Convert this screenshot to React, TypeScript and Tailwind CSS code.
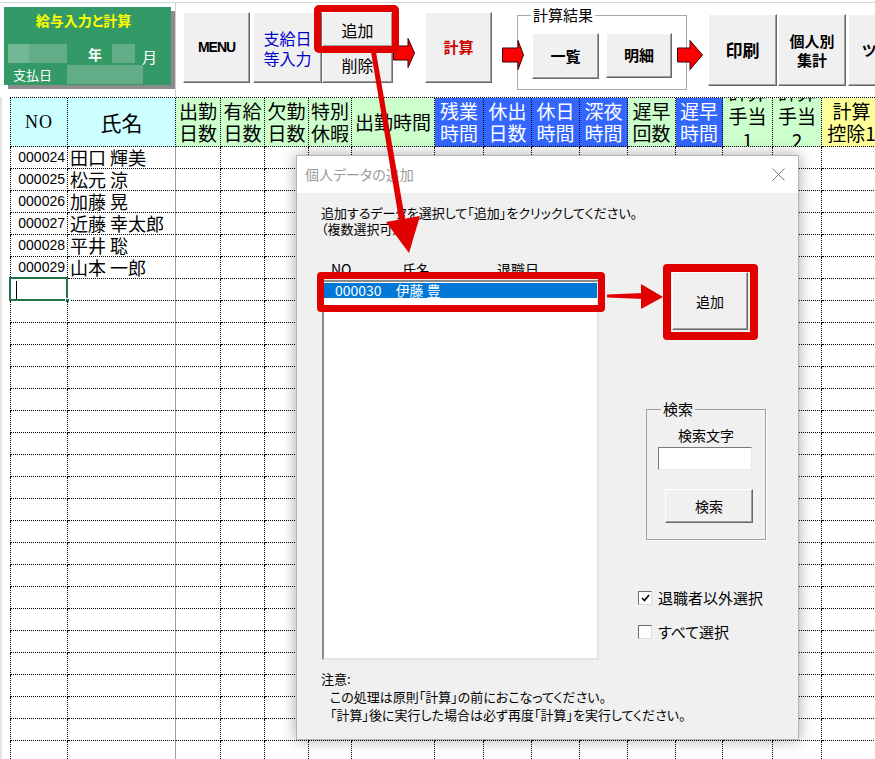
import React from 'react';

const GRID_COLS =
  'grid-cols-[58px_108px_45px_44px_44px_43px_83px_49px_48px_48px_48px_48px_47px_50px_49px_60px]';

const CYAN = 'bg-[#ccffff] text-black';
const GREEN = 'bg-[#ccffcc] text-black';
const BLUE = 'bg-[#3366ff] text-white';
const YELLOW = 'bg-[#ffff99] text-black';

interface Header {
  label: string[];
  cls: string;
  extra?: string;
}

const headers: Header[] = [
  { label: ['NO'], cls: CYAN, extra: "font-['Liberation_Serif',serif] text-[18px] tracking-[1px]" },
  { label: ['氏名'], cls: CYAN, extra: 'text-[21px]' },
  { label: ['出勤', '日数'], cls: GREEN },
  { label: ['有給', '日数'], cls: GREEN },
  { label: ['欠勤', '日数'], cls: GREEN },
  { label: ['特別', '休暇'], cls: GREEN },
  { label: ['出勤時間'], cls: GREEN },
  { label: ['残業', '時間'], cls: BLUE },
  { label: ['休出', '日数'], cls: BLUE },
  { label: ['休日', '時間'], cls: BLUE },
  { label: ['深夜', '時間'], cls: BLUE },
  { label: ['遅早', '回数'], cls: GREEN },
  { label: ['遅早', '時間'], cls: BLUE },
  { label: ['計算', '手当', '1'], cls: GREEN, extra: 'text-[19px] !leading-[24px] pb-[12px]' },
  { label: ['計算', '手当', '2'], cls: GREEN, extra: 'text-[19px] !leading-[24px] pb-[12px]' },
  { label: ['計算', '控除1'], cls: YELLOW },
];

const people: [string, string][] = [
  ['000024', '田口 輝美'],
  ['000025', '松元 涼'],
  ['000026', '加藤 晃'],
  ['000027', '近藤 幸太郎'],
  ['000028', '平井 聡'],
  ['000029', '山本 一郎'],
];

const cell = 'border-r border-b border-dotted border-black';

function Btn({ className = '', children }: { className?: string; children?: React.ReactNode }) {
  return (
    <div
      className={`shrink-0 flex flex-col items-center justify-center whitespace-nowrap bg-[#f0f0f0] border border-t-white border-l-white border-r-[#696969] border-b-[#696969] shadow-[inset_-1px_-1px_0_#a0a0a0] ${className}`}
    >
      {children}
    </div>
  );
}

function BlockArrow({ className = '', w, h, body }: { className?: string; w: number; h: number; body: number }) {
  const top = Math.round(h * 0.25);
  const bot = h - top;
  return (
    <svg width={w} height={h} viewBox={`0 0 ${w} ${h}`} className={`shrink-0 relative z-10 ${className}`}>
      <polygon
        points={`0.5,${top} ${body},${top} ${body},0.5 ${w - 0.5},${h / 2} ${body},${h - 0.5} ${body},${bot} 0.5,${bot}`}
        fill="#ff0000"
        stroke="#3a0000"
        strokeWidth="1"
      />
    </svg>
  );
}

function CheckBox({ checked }: { checked?: boolean }) {
  return (
    <span className="shrink-0 w-[14px] h-[14px] bg-white border border-t-[#6d6d6d] border-l-[#6d6d6d] border-r-[#dcdcdc] border-b-[#dcdcdc] flex items-center justify-center">
      {checked && (
        <svg width="9" height="8" viewBox="0 0 9 8">
          <path d="M1 4 L3.5 6.5 L8 1" stroke="#000" strokeWidth="1.6" fill="none" />
        </svg>
      )}
    </span>
  );
}

function Toolbar() {
  return (
    <div className="h-[97px] pt-[2px]">
      <div className="h-[95px] border-t border-[#d6d6d6] flex items-start">
        <div className="shrink-0 w-[176px] h-full border-r border-[#cfcfcf]">
          <div className="ml-[4px] mt-[4px] w-[167px] h-[78px] bg-[#339966] shadow-[4px_4px_0_#8c8c8c] text-white">
            <div className="h-[26px] leading-[26px] text-center pr-[8px] text-[14px] font-bold text-[#ffff00]">
              給与入力と計算
            </div>
            <div className="mt-[11px] h-[19px] flex items-center">
              <div className="ml-[4px] w-[59px] h-full bg-[#62ad87] flex">
                <div className="w-[21px] h-full bg-[#73b896]" />
              </div>
              <span className="ml-[21px] text-[14px] font-bold leading-none">年</span>
              <div className="ml-[10px] w-[23px] h-full bg-[#62ad87]" />
              <span className="ml-[7px] mt-[5px] text-[15px] leading-none">月</span>
            </div>
            <div className="mt-[2px] h-[19px] flex items-center">
              <span className="ml-[9px] text-[13px] leading-none">支払日</span>
              <div className="ml-[15px] w-[76px] h-full bg-[#62ad87]" />
            </div>
          </div>
        </div>

        <Btn className="ml-[7px] mt-[9px] w-[67px] h-[71px]">
          <span className="font-['Liberation_Sans',sans-serif] font-bold text-[14px] tracking-[-1px]">MENU</span>
        </Btn>
        <Btn className="ml-[3px] mt-[9px] w-[69px] h-[71px] text-[16px] leading-[20px] text-[#0000cc]">
          <span>支給日</span>
          <span>等入力</span>
        </Btn>
        <div className="shrink-0 mt-[9px] w-[71px] flex flex-col">
          <Btn className="h-[35px] text-[16px]">追加</Btn>
          <Btn className="h-[36px] text-[16px]">削除</Btn>
        </div>
        <BlockArrow className="mt-[35px]" w={22} h={30} body={15} />
        <Btn className="ml-[10px] mt-[9px] w-[67px] h-[71px] text-[15px] font-bold text-[#d00000]">計算</Btn>
        <BlockArrow className="ml-[10px] mt-[37px]" w={22} h={30} body={16} />
        <fieldset className="shrink-0 -ml-[7px] mt-[2px] w-[170px] h-[85px] border border-[#a8a8a8] px-[13px]">
          <legend className="px-[2px] text-[15px] leading-[20px]">計算結果</legend>
          <div className="flex mt-[8px] ml-[1px] gap-[7px]">
            <Btn className="w-[67px] h-[46px] text-[15px] font-bold">一覧</Btn>
            <Btn className="w-[66px] h-[45px] text-[15px] font-bold">明細</Btn>
          </div>
        </fieldset>
        <BlockArrow className="-ml-[10px] mt-[37px]" w={26} h={30} body={13} />
        <Btn className="ml-[5px] mt-[11px] w-[69px] h-[72px] text-[17px] font-bold">印刷</Btn>
        <Btn className="ml-[1px] mt-[11px] w-[68px] h-[72px] text-[15px] font-bold leading-[19px]">
          <span>個人別</span>
          <span>集計</span>
        </Btn>
        <Btn className="ml-[2px] mt-[11px] w-[60px] h-[72px] text-[15px] font-bold">
          <span className="self-start ml-[13px]">ツール</span>
        </Btn>
      </div>
    </div>
  );
}

function Sheet() {
  const rows = Array.from({ length: 28 }, (_, i) => people[i]);
  return (
    <div className="pl-[10px] shadow-[inset_2px_0_0_#e4e4e4]">
      <div className={`grid ${GRID_COLS} border-t border-dotted border-black`}>
        {headers.map((h, i) => (
          <div
            key={i}
            className={`h-[49px] ${cell} ${i === 0 ? 'border-l' : ''} ${h.cls} flex flex-col items-center justify-center overflow-hidden leading-[22px] ${h.extra ?? 'text-[19px]'}`}
          >
            {h.label.map((l) => (
              <span key={l} className="whitespace-nowrap">
                {l}
              </span>
            ))}
          </div>
        ))}
        {rows.map((p, r) =>
          headers.map((_, c) => {
            if (c === 0) {
              return (
                <div
                  key={`${r}-${c}`}
                  className={`relative h-[22px] ${cell} border-l flex items-center justify-end pr-[2px] font-['Liberation_Sans',sans-serif] text-[14px]`}
                >
                  {p?.[0]}
                  {r === 6 && (
                    <>
                      <div className="absolute -left-[2px] -top-[2px] -right-[1px] -bottom-[1px] border-2 border-[#217346]" />
                      <div className="absolute -right-[3px] -bottom-[3px] w-[5px] h-[5px] bg-[#217346] border border-white" />
                      <div className="absolute left-[5px] top-[2px] w-px h-[18px] bg-black" />
                    </>
                  )}
                </div>
              );
            }
            if (c === 1) {
              return (
                <div
                  key={`${r}-${c}`}
                  className={`h-[22px] ${cell} [border-right-style:solid] border-r-[#9e9e9e] flex items-center pl-[2px] text-[18px] whitespace-nowrap`}
                >
                  {p?.[1]}
                </div>
              );
            }
            return <div key={`${r}-${c}`} className={`h-[22px] ${cell}`} />;
          })
        )}
      </div>
    </div>
  );
}

function Dialog() {
  return (
    <div className="absolute z-10 left-[296px] top-[155px] w-[503px] h-[585px] bg-[#f0f0f0] border border-[#b4b4b4] shadow-[0_0_14px_rgba(0,0,0,0.35)] flex flex-col">
      <div className="h-[37px] shrink-0 bg-white flex items-center justify-between pl-[8px] pr-[13px]">
        <span className="text-[14px] text-[#9a9a9a]">個人データの追加</span>
        <svg width="13" height="13" viewBox="0 0 13 13">
          <path d="M0.5 0.5 L12.5 12.5 M12.5 0.5 L0.5 12.5" stroke="#7a7a7a" strokeWidth="1" />
        </svg>
      </div>
      <div className="flex-1 pl-[24px] pt-[12px] text-[13px]">
        <p className="leading-[16px]">
          追加するデータを選択して「追加」をクリックしてください。
          <br />
          （複数選択可）
        </p>
        <div className="flex mt-[22px]">
          <div className="shrink-0 ml-[1px] w-[277px]">
            <div className="h-[21px] flex text-[14px] leading-[21px]">
              <span className="ml-[9px] w-[71px]">NO</span>
              <span className="w-[95px]">氏名</span>
              <span>退職日</span>
            </div>
            <div className="h-[380px] bg-white border-2 border-t-[#8a8a8a] border-l-[#8a8a8a] border-r-[#e3e3e3] border-b-[#e3e3e3]">
              <div className="mt-[1px] h-[15px] bg-[#0078d7] text-white text-[14px] leading-[15px] pl-[11px] flex">
                <span>000030</span>
                <span className="ml-[14px]">伊藤 豊</span>
              </div>
            </div>
          </div>
          <div className="ml-[39px] flex flex-col items-start">
            <Btn className="ml-[34px] mt-[13px] w-[76px] h-[58px] text-[14px]">追加</Btn>
            <fieldset className="ml-[8px] mt-[69px] w-[120px] h-[141px] border border-[#a0a0a0] shadow-[1px_1px_0_#fff]">
              <legend className="ml-[14px] px-[2px] text-[15px] leading-[20px]">検索</legend>
              <div className="flex flex-col items-start">
                <div className="self-stretch text-center text-[14px] leading-[18px] mt-[7px]">検索文字</div>
                <div className="ml-[11px] mt-[3px] w-[94px] h-[23px] bg-white border border-t-[#7a7a7a] border-l-[#7a7a7a] border-r-[#e8e8e8] border-b-[#e8e8e8]" />
                <Btn className="ml-[18px] mt-[19px] w-[88px] h-[34px] text-[14px]">検索</Btn>
              </div>
            </fieldset>
            <div className="mt-[50px] h-[16px] flex items-center text-[15px]">
              <CheckBox checked />
              <span className="ml-[6px]">退職者以外選択</span>
            </div>
            <div className="mt-[18px] h-[16px] flex items-center text-[15px]">
              <CheckBox />
              <span className="ml-[6px]">すべて選択</span>
            </div>
          </div>
        </div>
        <div className="mt-[10px] leading-[18px]">
          <p>注意:</p>
          <p className="pl-[9px]">この処理は原則「計算」の前におこなってください。</p>
          <p className="pl-[9px]">「計算」後に実行した場合は必ず再度「計算」を実行してください。</p>
        </div>
      </div>
    </div>
  );
}

function Annotations() {
  return (
    <>
      <div className="absolute z-20 left-[314px] top-[5px] w-[85px] h-[48px] border-[7px] border-[#e00000] rounded-[5px]" />
      <div className="absolute z-20 left-[317px] top-[272px] w-[288px] h-[40px] border-[7px] border-[#e00000] rounded-[4px]" />
      <div className="absolute z-20 left-[663px] top-[264px] w-[95px] h-[76px] border-[8px] border-[#e00000] rounded-[4px]" />
      <svg className="absolute z-30 left-0 top-0 pointer-events-none" width="875" height="759">
        <polygon points="371,52 376,52 405,219 399,220" fill="#e00000" />
        <polygon points="386,222 420,216 409,253" fill="#e00000" />
        <polygon points="607,294.5 644,293 644,299 607,297.5" fill="#e00000" />
        <polygon points="641,284 663,297 641,309" fill="#e00000" />
      </svg>
    </>
  );
}

export default function App() {
  return (
    <div className="relative w-[875px] h-[759px] overflow-hidden bg-white text-black font-['Noto_Sans_CJK_JP',sans-serif] [font-feature-settings:'palt']">
      <Toolbar />
      <Sheet />
      <Dialog />
      <Annotations />
    </div>
  );
}
